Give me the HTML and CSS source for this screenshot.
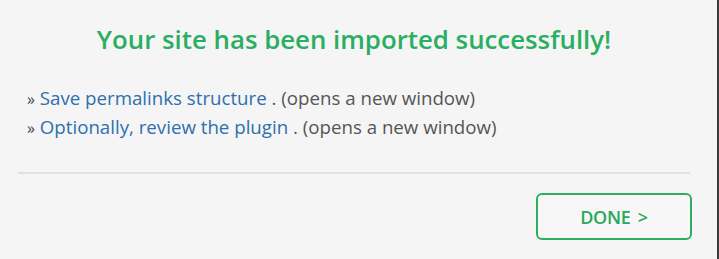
FILE: index.html
```html
<!DOCTYPE html>
<html>
<head>
<meta charset="utf-8">
<link rel="stylesheet" href="styles.css">
</head>
<body>
<div class="panel">
  <h1 class="title">Your site has been imported successfully!</h1>
  <ul class="links">
    <li><span class="raquo">»</span> <a class="link" href="#">Save permalinks structure</a> <span class="note">. (opens a new window)</span></li>
    <li><span class="raquo">»</span> <a class="link" href="#">Optionally, review the plugin</a> <span class="note">. (opens a new window)</span></li>
  </ul>
  <hr class="divider">
  <div class="actions">
    <button class="done">DONE &gt;</button>
  </div>
</div>
</body>
</html>
```
FILE: styles.css
```css
html, body {
  margin: 0;
  padding: 0;
  background: #f5f5f5;
}
.panel {
  box-sizing: border-box;
  width: 719px;
  height: 259px;
  background: #f5f5f5;
  border-right: 2px solid #3a3a3a;
  padding: 21px 27px 0 18px;
  font-family: "Open Sans", "Noto Sans", sans-serif;
}
.title {
  margin: 0;
  text-align: center;
  font-size: 25.8px;
  font-weight: 600;
  color: #2aae62;
  line-height: 36px;
  letter-spacing: 0;
}
.links {
  list-style: none;
  margin: 27px 0 0 0;
  padding: 0 0 0 9px;
  font-size: 18.7px;
  line-height: 28px;
  color: #555;
}
.raquo {
  color: #444;
  font-size: 16px;
}
.link {
  color: #2f6fad;
  text-decoration: none;
}
.divider {
  border: 0;
  height: 2px;
  background: #e1e1e1;
  margin: 30px 0 0 0;
}
.actions {
  display: flex;
  justify-content: flex-end;
  margin-top: 19px;
}
.done {
  box-sizing: border-box;
  width: 156px;
  height: 47px;
  border: 2px solid #2fae60;
  border-radius: 6px;
  background: #f7f7f7;
  color: #2aa85c;
  font-family: "Open Sans", "Noto Sans", sans-serif;
  font-size: 18px;
  font-weight: 600;
  letter-spacing: -0.3px;
  word-spacing: 3px;
  margin-right: -2px;
  padding: 0;
}
```
